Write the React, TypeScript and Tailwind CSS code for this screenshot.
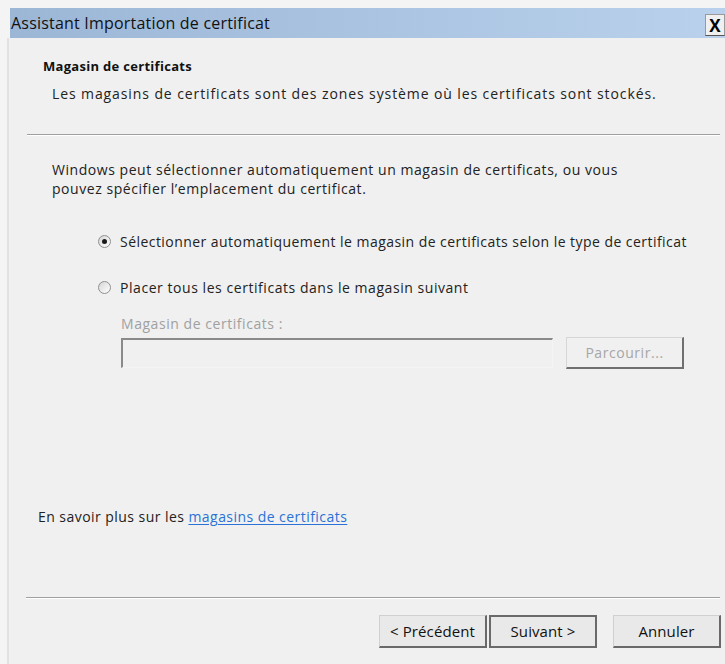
import React from "react";

const ui = "font-['Open_Sans',sans-serif]";

function Radio({ checked }: { checked?: boolean }) {
  return (
    <span className="flex h-[13px] w-[13px] items-center justify-center rounded-full border border-[#8e8f8f] bg-gradient-to-br from-[#d6d6d6] to-white">
      {checked && <span className="h-[5px] w-[5px] rounded-full bg-[#1a1a1a]" />}
    </span>
  );
}

function WinButton({ label, isDefault }: { label: string; isDefault?: boolean }) {
  return (
    <button
      className={
        "h-[33px] w-[108px] bg-[#e9e9e9] text-[15px] tracking-[0.1px] text-[#111] " +
        (isDefault
          ? "border-2 border-[#6a6a6a]"
          : "border border-[#d0d0d0] border-b-2 border-r-2 border-b-[#696969] border-r-[#696969]")
      }
    >
      {label}
    </button>
  );
}

function Separator() {
  return <div className="h-[2px] border-t border-[#a0a0a0] border-b border-b-white" />;
}

export default function App() {
  return (
    <div className={`w-[725px] h-[664px] bg-[#f4f4f4] overflow-hidden ${ui}`}>
      <div className="h-[8px]" />
      <div className="ml-[10px] flex h-[30px] items-center justify-between bg-gradient-to-r from-[#9cb6d6] to-[#b9d1ec] pl-[1px]">
        <span className="text-[16px] tracking-[0.2px] text-[#111]">Assistant Importation de certificat</span>
        <span className="mt-[4px] flex h-[22px] w-[20px] items-center justify-center border border-[#9a9a9a] border-b-[#555] bg-[#f0f0f0] text-[17px] font-bold leading-none text-black">
          X
        </span>
      </div>
      <div className="flex h-[626px]">
        <div className="ml-[7px] w-[2px] bg-[#e2e2e2]" />
        <div className="flex flex-1 flex-col bg-[#f0f0f0] text-[14px] tracking-[0.55px] leading-[19px] text-[#222]">
          {/* header */}
          <div className="pl-[34px] pt-[20px] h-[96px]">
            <p className="text-[13px] font-bold tracking-[0.3px] text-[#111] leading-[16px]">Magasin de certificats</p>
            <p className="mt-[10px] pl-[9px] tracking-[0.9px]">
              Les magasins de certificats sont des zones système où les certificats sont stockés.
            </p>
          </div>
          <div className="ml-[18px] mr-[5px]">
            <Separator />
          </div>

          {/* body */}
          <div className="pl-[43px] pt-[24px]">
            <p>
              Windows peut sélectionner automatiquement un magasin de certificats, ou vous
              <br />
              pouvez spécifier l’emplacement du certificat.
            </p>
            <div className="mt-[34px] pl-[46px] flex flex-col gap-[27px]">
              <label className="flex items-center gap-[9px]">
                <Radio checked />
                <span className="tracking-[0.45px]">
                  Sélectionner automatiquement le magasin de certificats selon le type de certificat
                </span>
              </label>
              <label className="flex items-center gap-[9px]">
                <Radio />
                <span>Placer tous les certificats dans le magasin suivant</span>
              </label>
            </div>
            <div className="mt-[17px] pl-[69px]">
              <p className="text-[#a0a0a0]">Magasin de certificats :</p>
              <div className="mt-[4px] flex items-center gap-[13px]">
                <div className="h-[30px] w-[432px] border-2 border-[#8a8a8a] border-r-[#f4f4f4] border-b-[#f4f4f4] border-r border-b bg-[#f0f0f0]" />
                <div className="flex h-[32px] w-[118px] items-center justify-center border border-[#d7d7d7] border-b-2 border-r-2 border-b-[#707070] border-r-[#707070] bg-[#f0f0f0] text-[#a6a6a6]">
                  Parcourir...
                </div>
              </div>
            </div>
          </div>

          <div className="flex-1" />

          <p className="pl-[29px] tracking-[0.45px]">
            En savoir plus sur les{" "}
            <a className="text-[#2a72d5] underline underline-offset-2">magasins de certificats</a>
          </p>

          <div className="mt-[71px] ml-[17px] mr-[5px]">
            <Separator />
          </div>
          <div className="mt-[16px] mb-[16px] flex justify-end pr-[4px]">
            <div className="flex gap-[2px]">
              <WinButton label="< Précédent" />
              <WinButton label="Suivant >" isDefault />
            </div>
            <div className="ml-[16px]">
              <WinButton label="Annuler" />
            </div>
          </div>
        </div>
      </div>
    </div>
  );
}
